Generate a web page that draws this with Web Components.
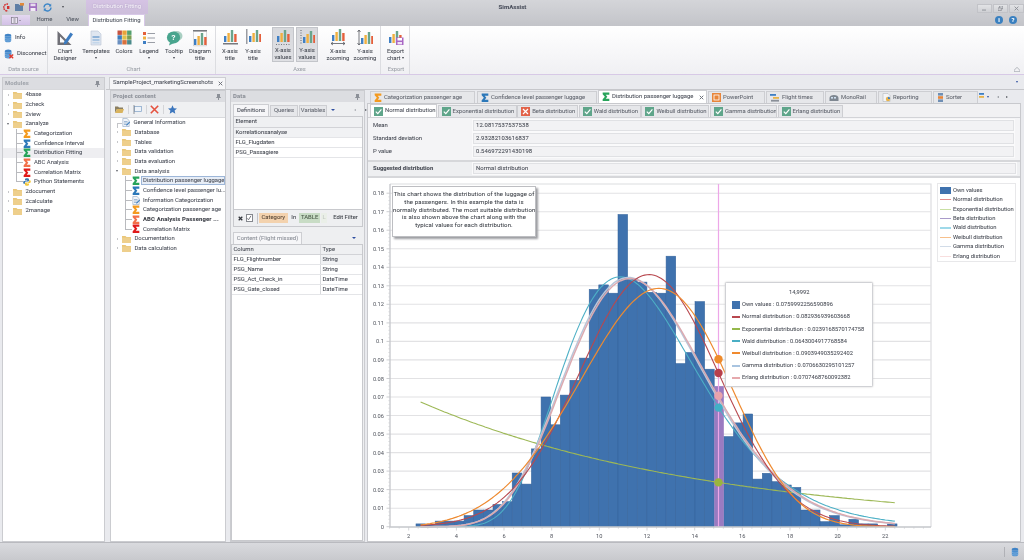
<!DOCTYPE html>
<html lang="en"><head><meta charset="utf-8"><title>SimAssist</title>
<style>
html,body{margin:0;padding:0;width:1024px;height:560px;overflow:hidden;background:#e9eaee}
body{font:5.9px/1.2 Roboto,"Liberation Sans",sans-serif;color:#44484f}
</style></head>
<body>
<sa-app>
  <sa-title-bar></sa-title-bar>
  <sa-ribbon>
    <sa-ribbon-group caption="Data source" style="width:48px">
      <div style="display:flex;flex-direction:column;padding:3px 0 0 4px;gap:0">
        <sa-ribbon-small icon="db" label="Info"></sa-ribbon-small>
        <sa-ribbon-small icon="dbx" label="Disconnect"></sa-ribbon-small>
      </div>
    </sa-ribbon-group>
    <sa-ribbon-group caption="Chart" style="width:167px;padding-left:3px;box-sizing:border-box">
      <sa-ribbon-button icon="designer" label="Chart|Designer" style="width:26px"></sa-ribbon-button>
      <sa-ribbon-button icon="templates" label="Templates" arrow style="width:32px;margin-left:2px"></sa-ribbon-button>
      <sa-ribbon-button icon="colors" label="Colors" style="width:24px"></sa-ribbon-button>
      <sa-ribbon-button icon="legend" label="Legend" arrow style="width:26px"></sa-ribbon-button>
      <sa-ribbon-button icon="tooltip" label="Tooltip" arrow style="width:24px"></sa-ribbon-button>
      <sa-ribbon-button icon="dtitle" label="Diagram|title" style="width:28px"></sa-ribbon-button>
    </sa-ribbon-group>
    <sa-ribbon-group caption="Axes" style="width:164px;padding-left:2px;box-sizing:border-box">
      <sa-ribbon-button icon="xt" label="X-axis|title" style="width:22px"></sa-ribbon-button>
      <sa-ribbon-button icon="yt" label="Y-axis|title" style="width:22px;margin-left:1px"></sa-ribbon-button>
      <sa-ribbon-button icon="xv" label="X-axis|values" selected style="width:22px;margin-left:8px"></sa-ribbon-button>
      <sa-ribbon-button icon="yv" label="Y-axis|values" selected style="width:22px;margin-left:2px"></sa-ribbon-button>
      <sa-ribbon-button icon="xz" label="X-axis|zooming" style="width:26px;margin-left:7px"></sa-ribbon-button>
      <sa-ribbon-button icon="yz" label="Y-axis|zooming" style="width:26px;margin-left:1px"></sa-ribbon-button>
    </sa-ribbon-group>
    <sa-ribbon-group caption="Export" style="width:28px;padding-left:1px;box-sizing:border-box">
      <sa-ribbon-button icon="export" label="Export|chart" inline-arrow style="width:25px"></sa-ribbon-button>
    </sa-ribbon-group>
  </sa-ribbon>
  <sa-main>
    <sa-pane slot="left" title="Modules" dim style="width:103px;margin:2px 0 0 2px">
      <sa-tree>
        <sa-tree-row icon="folder" exp="r" label="4base"></sa-tree-row>
        <sa-tree-row icon="folder" exp="r" label="2check"></sa-tree-row>
        <sa-tree-row icon="folder" exp="r" label="2view"></sa-tree-row>
        <sa-tree-row icon="folder" exp="d" label="2analyze"></sa-tree-row>
        <sa-tree-row level="1" icon="sigma" color="#f39a1f" label="Categorization"></sa-tree-row>
        <sa-tree-row level="1" icon="sigma" color="#2c78b9" label="Confidence Interval"></sa-tree-row>
        <sa-tree-row level="1" icon="sigma" color="#27a35a" label="Distribution Fitting" hover></sa-tree-row>
        <sa-tree-row level="1" icon="sigma" color="#f2704a" label="ABC Analysis"></sa-tree-row>
        <sa-tree-row level="1" icon="sigma" color="#e01b1b" label="Correlation Matrix"></sa-tree-row>
        <sa-tree-row level="1" last icon="python" label="Python Statements"></sa-tree-row>
        <sa-tree-row icon="folder" exp="r" label="2document"></sa-tree-row>
        <sa-tree-row icon="folder" exp="r" label="2calculate"></sa-tree-row>
        <sa-tree-row icon="folder" exp="r" label="2manage"></sa-tree-row>
      </sa-tree>
    </sa-pane>
    <sa-doc-strip slot="strip">
      <sa-tab label="SampleProject_marketingScreenshots" active close style="width:117px;height:12px;margin-left:3px"></sa-tab>
    </sa-doc-strip>
    <sa-pane slot="project" title="Project content" style="width:116px">
      <sa-project-tools></sa-project-tools>
      <sa-tree style="padding-top:0;padding-left:1px">
        <sa-tree-row icon="doc" exp="c" label="General Information"></sa-tree-row>
        <sa-tree-row icon="folder" exp="r" label="Database"></sa-tree-row>
        <sa-tree-row icon="folder" exp="r" label="Tables"></sa-tree-row>
        <sa-tree-row icon="folder" exp="r" label="Data validation"></sa-tree-row>
        <sa-tree-row icon="folder" exp="r" label="Data evaluation"></sa-tree-row>
        <sa-tree-row icon="folder" exp="d" label="Data analysis"></sa-tree-row>
        <sa-tree-row level="1" icon="sigma" color="#27a35a" label="Distribution passenger luggage" selected></sa-tree-row>
        <sa-tree-row level="1" icon="sigma" color="#2c78b9" label="Confidence level passenger lu..."></sa-tree-row>
        <sa-tree-row level="1" icon="doc" label="Information Categorization"></sa-tree-row>
        <sa-tree-row level="1" icon="sigma" color="#f39a1f" label="Categorization passenger age"></sa-tree-row>
        <sa-tree-row level="1" icon="sigma" color="#f2704a" label="ABC Analysis Passenger ..." bold></sa-tree-row>
        <sa-tree-row level="1" last icon="sigma" color="#e01b1b" label="Correlation Matrix"></sa-tree-row>
        <sa-tree-row icon="folder" exp="r" label="Documentation"></sa-tree-row>
        <sa-tree-row icon="folder" exp="r" label="Data calculation"></sa-tree-row>
      </sa-tree>
    </sa-pane>
    <sa-pane slot="data" title="Data" style="width:135px">
      <sa-data-panel></sa-data-panel>
    </sa-pane>
    <sa-doc-area slot="doc"></sa-doc-area>
  </sa-main>
  <sa-status></sa-status>
</sa-app>

<script>
/* ---------- shared icons ---------- */
const svg=(w,h,vb,body)=>`<svg width="${w}" height="${h}" viewBox="${vb}" style="display:block;flex:none">${body}</svg>`;
const barset=`<rect x="2" y="8" width="2.4" height="6" fill="#3f7fc4"/><rect x="5.4" y="5" width="2.4" height="9" fill="#f0b040"/><rect x="8.8" y="2" width="2.4" height="12" fill="#6aa58c"/><rect x="12.2" y="6" width="2.4" height="8" fill="#e4603c"/>`;
const dbShape=`<ellipse cx="5" cy="2.6" rx="4" ry="1.9" fill="#3f83c6"/><path d="M1 2.6V9.4C1 10.5 2.8 11.4 5 11.4S9 10.5 9 9.4V2.6C9 3.7 7.2 4.6 5 4.6S1 3.7 1 2.6Z" fill="#4b8fd0"/><path d="M1 5.4C1 6.5 2.8 7.4 5 7.4S9 6.5 9 5.4M1 7.8C1 8.9 2.8 9.8 5 9.8S9 8.9 9 7.8" stroke="#bcd6ee" stroke-width=".5" fill="none"/>`;
const ICONS={
  db:()=>svg(8,10,"0 0 10 12",dbShape),
  dbx:()=>svg(10,10,"0 0 12 12",dbShape+`<path d="M6.5 6.5L11 11M11 6.5L6.5 11" stroke="#e0382c" stroke-width="1.6"/>`),
  designer:()=>svg(18,18,"0 0 18 18",`<path d="M1.5 2L1.5 16H15.5Z M4 7.5V13.5H10Z" fill="#6f6f76" fill-rule="evenodd"/><path d="M8 13L14.5 3.5L17 5.2L10.5 14.7L7.8 15.6Z" fill="#3d7cc0"/>`),
  templates:()=>svg(16,16,"0 0 16 16",`<path d="M3 1H10L13 4V15H3Z" fill="#dfe6f0" stroke="#b9c4d3" stroke-width=".6"/><rect x="4.5" y="6" width="7" height="2" fill="#90b3d8"/><rect x="4.5" y="9" width="7" height="2" fill="#a9c5e2"/><rect x="4.5" y="12" width="7" height="1.5" fill="#c3d6ea"/>`),
  colors:()=>svg(15,15,"0 0 15 15",[["#c55340","#e8a33b","#55a06e"],["#3c7cbc","#e0c04a","#7a9e52"],["#6a8fc0","#d9703c","#4b8a8a"]].map((r,j)=>r.map((c,i)=>`<rect x="${.5+i*4.8}" y="${.5+j*4.8}" width="4.4" height="4.4" fill="${c}"/>`).join('')).join('')),
  legend:()=>svg(14,14,"0 0 14 14",`<rect x="1" y="1" width="3" height="3" fill="#e4603c"/><rect x="1" y="5.5" width="3" height="3" fill="#f0b040"/><rect x="1" y="10" width="3" height="3" fill="#3f7fc4"/><path d="M5.5 2.5H13M5.5 7H13M5.5 11.5H13" stroke="#9a9ea6"/>`),
  tooltip:()=>svg(17,16,"0 0 17 16",`<ellipse cx="10.5" cy="6" rx="6" ry="5" fill="#a9cfc2"/><ellipse cx="7.5" cy="7.5" rx="6.6" ry="6" fill="#49a58e"/><path d="M4 12L3 15.5L8 13Z" fill="#49a58e"/><text x="7.5" y="10.3" font-size="8" font-weight="700" fill="#fff" text-anchor="middle" font-family="Roboto">?</text>`),
  dtitle:()=>svg(16,18,"0 0 16 18",`<rect x="1" y="1" width="14" height="1.6" fill="#77797f"/><path d="M1.5 3V17M14.5 3V17M1.5 16.8H14.5" stroke="#c8c9cc" stroke-width=".7"/><g transform="translate(0,2)">${barset}</g>`),
  xt:()=>svg(15,16,"0 0 15 16",`<g transform="translate(-1,-1)">${barset}</g><rect x="0" y="14" width="15" height="1.5" fill="#77797f"/>`),
  yt:()=>svg(15,16,"0 0 15 16",`<rect x="0" y="0" width="1.5" height="15" fill="#9a9ca2"/><g transform="translate(1,-1)">${barset}</g>`),
  xv:()=>svg(15,16,"0 0 15 16",`<g transform="translate(-1,-2)">${barset}</g><path d="M0 14.5H15" stroke="#77797f" stroke-dasharray="1 1.5" stroke-width="1.2"/>`),
  yv:()=>svg(15,16,"0 0 15 16",`<path d="M1 0V14" stroke="#77797f" stroke-dasharray="1 1.5" stroke-width="1.2"/><g transform="translate(1,-1)">${barset}</g>`),
  xz:()=>svg(16,17,"0 0 16 17",`<g transform="translate(0,-2)">${barset}</g><path d="M1 14.5H15M3 13L1 14.5L3 16M13 13L15 14.5L13 16" stroke="#55585f" stroke-width=".8" fill="none"/>`),
  yz:()=>svg(16,17,"0 0 16 17",`<path d="M2 1V16M.5 3L2 1L3.5 3M.5 14L2 16L3.5 14" stroke="#55585f" stroke-width=".8" fill="none"/><g transform="translate(2,1)">${barset}</g>`),
  export:()=>svg(16,17,"0 0 16 17",`<g transform="translate(-1,0)">${barset}</g><rect x="8" y="8.5" width="7.5" height="7.5" fill="#a866c4"/><rect x="9.5" y="9" width="4.5" height="2.5" fill="#fff"/><rect x="9.5" y="13" width="4.5" height="2.4" fill="#f1e6f6"/>`),
  folder:()=>svg(9,8,"0 0 9 8",`<path d="M0 1H3.5L4.5 2H9V8H0Z" fill="#eac678"/><rect x="0" y="2.6" width="9" height="5.4" fill="#eecf8c"/>`),
  sigma:c=>svg(8,9.5,"0 0 8 10",`<path d="M.5 .5H7.5V3H3.7L5.4 5L3.7 7H7.5V9.5H.5V7.6L2.8 5L.5 2.4Z" fill="${c}"/>`),
  doc:()=>svg(8,9,"0 0 8 9",`<path d="M.8 .5H5L7.2 2.6V8.5H.8Z" fill="#f2f5f9" stroke="#8ea6c2" stroke-width=".6"/><path d="M2 3.5H5.5M2 5H6M2 6.5H5" stroke="#6c93be" stroke-width=".6"/><path d="M4 7L7.5 3.5L8 4.4L4.8 7.7Z" fill="#3c7cbc"/>`),
  python:()=>svg(8,8,"0 0 8 8",`<path d="M4 .3C2.5 .3 2 .8 2 1.6V2.6H4.2V3H1.2C.5 3 .2 3.6 .2 4.4S.6 5.8 1.2 5.8H2V4.8C2 4 2.6 3.6 3.2 3.6H5C5.6 3.6 6 3.2 6 2.6V1.6C6 .8 5.4 .3 4 .3Z" fill="#3b78b0"/><path d="M4 7.7C5.5 7.7 6 7.2 6 6.4V5.4H3.8V5H6.8C7.5 5 7.8 4.4 7.8 3.6S7.4 2.2 6.8 2.2H6V3.2C6 4 5.4 4.4 4.8 4.4H3C2.4 4.4 2 4.8 2 5.4V6.4C2 7.2 2.6 7.7 4 7.7Z" fill="#f3c83c"/>`),
  check:()=>svg(9,9,"0 0 9 9",`<rect width="9" height="9" fill="#5fa58a"/><path d="M1.8 4.6L3.8 6.6L7.4 2.4" stroke="#fff" stroke-width="1.2" fill="none"/>`),
  cross:()=>svg(9,9,"0 0 9 9",`<rect width="9" height="9" fill="#e2634a"/><path d="M2 2L7 7M7 2L2 7" stroke="#fff" stroke-width="1.2"/>`),
  ppt:()=>svg(9,9,"0 0 9 9",`<rect width="9" height="9" fill="#e8853a"/><rect x="2" y="2" width="5" height="5" fill="none" stroke="#fff" stroke-width=".8"/>`),
  flight:()=>svg(10,9,"0 0 10 9",`<rect x="0" y="1" width="6" height="1.8" fill="#3f7fc4"/><rect x="3" y="4" width="6" height="1.8" fill="#e8b34a"/><rect x="1" y="6.8" width="8" height="1.8" fill="#8a8f98"/>`),
  mono:()=>svg(10,8,"0 0 10 8",`<path d="M.5 7V4C.5 2 2.5 1 5 1S9.5 2 9.5 4V7Z" fill="#7e8791"/><rect x="2" y="3" width="2" height="1.6" fill="#cfe0f0"/><rect x="5" y="3" width="2" height="1.6" fill="#cfe0f0"/>`),
  report:()=>svg(9,9,"0 0 9 9",`<path d="M1 .5H6L8 2.5V8.5H1Z" fill="#f4f4f6" stroke="#b4b8be" stroke-width=".6"/><circle cx="6" cy="6" r="2.2" fill="#e8b34a"/><path d="M6 6V3.8A2.2 2.2 0 0 1 8.2 6Z" fill="#3f7fc4"/>`),
  sorter:()=>svg(7,9,"0 0 7 9",`<rect x="1" y="0" width="5" height="2.6" fill="#6f8fb5"/><rect x="1" y="3.2" width="5" height="2.6" fill="#e8853a"/><rect x="1" y="6.4" width="5" height="2.6" fill="#6f8fb5"/>`),
  partial:()=>svg(5,9,"0 0 5 9",`<rect y="1" width="5" height="1.8" fill="#3f7fc4"/><rect y="4" width="5" height="1.8" fill="#e8b34a"/>`),
};
const FONT=`font-family:Roboto,"Liberation Sans",sans-serif;`;
const tri=(dir,c='#3a4a6a',s=2)=>{
  const m={d:`border-left:${s}px solid transparent;border-right:${s}px solid transparent;border-top:${s*1.2}px solid ${c}`,
           r:`border-top:${s}px solid transparent;border-bottom:${s}px solid transparent;border-left:${s*1.2}px solid ${c}`,
           l:`border-top:${s}px solid transparent;border-bottom:${s}px solid transparent;border-right:${s*1.2}px solid ${c}`};
  return `<span style="display:inline-block;width:0;height:0;flex:none;${m[dir]}"></span>`;
};
const pin=`<svg width="5" height="6" viewBox="0 0 5 6" style="display:block;flex:none"><path d="M1 0H4V3.2H5V4H3V6H2V4H0V3.2H1Z" fill="#8c9098"/></svg>`;

class Base extends HTMLElement{
  connectedCallback(){
    if(this.shadowRoot) return;
    this.attachShadow({mode:'open'}).innerHTML=`<style>${this.css()}</style>${this.html()}`;
  }
  a(n,d=''){const v=this.getAttribute(n);return v===null?d:v}
  has(n){return this.hasAttribute(n)}
  css(){return ''} html(){return '<slot></slot>'}
}

class SaApp extends Base{
  css(){return `:host{display:flex;flex-direction:column;width:1024px;height:560px;overflow:hidden;background:#e9eaee;filter:blur(.32px);-webkit-text-stroke:.07px currentColor}`}
}
class SaTitleBar extends Base{
  css(){return `:host{display:block;height:26px;background:linear-gradient(#d4d5d9,#c3c4c9);flex:none;${FONT}}
  .r{display:flex;align-items:center}
  .r1{height:14px}.r2{height:12px;align-items:stretch}
  .qat{width:86px;display:flex;align-items:center;flex:none;box-sizing:border-box;padding-left:2px}
  .qat svg{flex:none}
  .ctx{width:62px;height:14px;flex:none;background:linear-gradient(#d5c3e4,#cdbedb);display:flex;align-items:center;justify-content:center;color:#f4eff8;font-size:5.9px;text-shadow:0 0 1.5px #9c8bb0}
  .title{flex:1;text-align:center;padding-right:100px;font-weight:700;font-size:6.1px;color:#4a4f5c}
  .win{display:flex;gap:1px;flex:none;margin-right:0;align-self:flex-start;margin-top:4px}
  .win span{width:15px;height:9px;background:linear-gradient(#e2e3e6,#cfd0d4);border:.5px solid #c2c3c8;box-sizing:border-box;display:flex;align-items:center;justify-content:center}
  .file{width:28px;margin:1px 0 1px 2px;background:linear-gradient(#e4d8f0,#d2c0e6);display:flex;align-items:center;justify-content:center;gap:1px}
  .t{display:flex;align-items:center;justify-content:center;color:#555a64}
  .active{width:57px;margin-left:2px;background:#fff;border:.7px solid #d8c8e8;border-bottom:0;box-sizing:border-box}
  .sp{flex:1}
  .help{display:flex;gap:6px;margin:2px 7px 0 0;flex:none}
  .help b{width:8px;height:8px;border-radius:50%;background:#3a80c0;color:#fff;font-size:6px;line-height:8px;text-align:center}`}
  html(){return `<div class="r r1"><div class="qat">
    <svg width="8" height="9" viewBox="0 0 8 9" style="margin-right:5px"><path d="M6 1.2A3.4 3.4 0 1 0 6 7.8" fill="none" stroke="#d43030" stroke-width="1.5" stroke-dasharray="1.6 .7"/><rect x="5" y="3" width="2.4" height="3" fill="#d43030"/></svg>
    <svg width="9" height="8" viewBox="0 0 9 8" style="margin-right:5px"><path d="M0 1H3.5L4.5 2H8V8H0Z" fill="#5e7fa6"/><rect x="5" y="0" width="4" height="2.6" fill="#e08a3a"/></svg>
    <svg width="8" height="8" viewBox="0 0 8 8" style="margin-right:6px"><rect width="8" height="8" fill="#a070c0"/><rect x="1.5" y=".6" width="5" height="2.6" fill="#e6dcee"/><rect x="1.5" y="5" width="5" height="3" fill="#f2ecf6"/></svg>
    <svg width="9" height="9" viewBox="0 0 9 9" style="margin-right:10px"><path d="M1 4.5A3.5 3.5 0 0 1 7.4 2.6M8 4.5A3.5 3.5 0 0 1 1.6 6.4" fill="none" stroke="#3c86c8" stroke-width="1.3"/><path d="M8.2 .6V3.4H5.6ZM.8 8.4V5.6H3.4Z" fill="#3c86c8"/></svg>
    ${tri('d','#45484f',1.7)}</div>
    <div class="ctx">Distribution Fitting</div>
    <div class="title">SimAssist</div>
    <div class="win"><span>${svg(5,5,"0 0 5 5",'<rect y="3.6" width="4" height=".9" fill="#8a8d94"/>')}</span><span>${svg(5,5,"0 0 5 5",'<rect x="1.6" width="3.2" height="2.8" fill="none" stroke="#8a8d94" stroke-width=".7"/><rect y="1.9" width="3.2" height="2.8" fill="#cfd0d4" stroke="#8a8d94" stroke-width=".7"/>')}</span><span>${svg(5,5,"0 0 5 5",'<path d="M.6 .6L4.4 4.4M4.4 .6L.6 4.4" stroke="#8a8d94" stroke-width=".9"/>')}</span></div>
  </div>
  <div class="r r2">
    <div class="file">${svg(7,7,"0 0 7 7",'<rect x=".5" y=".5" width="6" height="6" fill="#ece6f3" stroke="#7f7a88" stroke-width=".7"/><rect x="2.4" y=".5" width="2.2" height="6" fill="#b8b4c0"/>')}${tri('d','#6c6876',1.2)}</div>
    <div class="t" style="width:29px">Home</div><div class="t" style="width:27px">View</div>
    <div class="t active">Distribution Fitting</div><div class="sp"></div>
    <div class="help"><b>i</b><b>?</b></div>
  </div>`}
}
class SaRibbon extends Base{
  css(){return `:host{display:flex;height:49px;flex:none;background:linear-gradient(#fff,#f6f6f8 60%,#f0f0f3);border-bottom:1px solid #d7c9e6;box-sizing:border-box;position:relative;${FONT}}
  .collapse{position:absolute;right:4px;bottom:2px;width:6px;height:5px}`}
  html(){return `<slot></slot><div class="collapse">${svg(6,5,"0 0 6 5",'<path d="M3 .3L5.8 3.2V4.7H.2V3.2Z" fill="none" stroke="#9a9ea6" stroke-width=".7"/>')}</div>`}
}
class SaRibbonGroup extends Base{
  css(){return `:host{display:flex;flex-direction:column;height:48px;border-right:1px solid #dcdde1;flex:none;box-sizing:border-box;margin-right:1px}
  .b{display:flex;height:36px;margin-top:1px;flex:none}
  .c{flex:1;display:flex;align-items:center;justify-content:center;color:#a1a5ac;font-size:5.7px;padding-top:1px}`}
  html(){return `<div class="b"><slot></slot></div><div class="c">${this.a('caption')}</div>`}
}
class SaRibbonButton extends Base{
  css(){return `:host{display:flex;flex-direction:column;align-items:center;flex:none;height:35px;box-sizing:border-box;padding-top:1.5px;color:#4a4e57;font-size:5.9px;line-height:7.2px;text-align:center}
  :host([selected]){background:linear-gradient(#d8d9dd,#dfe0e4);border:.7px solid #c3c5ca}
  .i{height:18px;display:flex;align-items:center;justify-content:center;margin-bottom:1.5px}
  .a{display:flex;justify-content:center;padding-top:1.5px}
  .l{display:flex;align-items:center;gap:1.5px;justify-content:center}`}
  html(){
    const ls=this.a('label').split('|');
    const inl=this.has('inline-arrow');
    return `<div class="i">${ICONS[this.a('icon')]()}</div>`+
      ls.map((l,i)=>`<div class="l">${l}${inl&&i==ls.length-1?tri('d','#3d4048',1.8):''}</div>`).join('')+
      (this.has('arrow')?`<div class="a">${tri('d','#3d4048',1.8)}</div>`:'');
  }
}
class SaRibbonSmall extends Base{
  css(){return `:host{display:flex;align-items:center;gap:3px;height:16px;color:#4a4e57;white-space:nowrap}`}
  html(){return `${ICONS[this.a('icon')]()}<span>${this.a('label')}</span>`}
}
class SaMain extends Base{
  css(){return `:host{display:flex;flex:1;min-height:0;height:467px;${FONT}}
  .left{display:flex;flex:none}
  .right{display:flex;flex-direction:column;flex:1;min-width:0;margin-left:1px}
  .body{display:flex;flex:1;min-height:0;padding:.5px 3px 0 4px;gap:4px;border-top:1px solid #c6c7cb;box-sizing:border-box}
  .body ::slotted([slot=doc]){margin-left:-2px}`}
  html(){return `<div class="left"><slot name="left"></slot></div><div class="right"><slot name="strip"></slot>
  <div class="body"><slot name="project"></slot><slot name="data"></slot><slot name="doc"></slot></div></div>`}
}
class SaDocStrip extends Base{
  css(){return `:host{display:flex;align-items:flex-end;height:13.5px;flex:none;position:relative}
  .m{margin-left:auto;align-self:center;margin-right:6px}`}
  html(){return `<slot></slot><div class="m">${tri('d','#2f4fa0',1.9)}</div>`}
}
class SaPane extends Base{
  css(){return `:host{display:flex;flex-direction:column;flex:none;min-height:0;border:1px solid #cbccd0;box-sizing:border-box;background:#eeeff1}
  .h{height:11px;flex:none;display:flex;align-items:center;justify-content:space-between;padding:0 4px 0 2px;background:#dcdde1;color:#8d9199;font-weight:700;font-size:5.9px;letter-spacing:.15px}
  :host([dim]) .h{color:#a3a7ae}
  .c{flex:1;min-height:0;display:flex;flex-direction:column}`}
  html(){return `<div class="h"><span>${this.a('title')}</span>${pin}</div><div class="c"><slot></slot></div>`}
}
class SaTree extends Base{
  css(){return `:host{display:block;flex:1;background:#fff;padding-top:0.2px;min-height:0;overflow:hidden;border-top:1px solid #d8d9dc}`}
}
class SaTreeRow extends Base{
  css(){return `:host{display:flex;align-items:center;height:9.66px;white-space:nowrap;color:#50545e}
  :host([hover]){background:#eeeef1}
  .e{width:10px;height:100%;flex:none;display:flex;align-items:center;justify-content:center}
  .c0{width:5px;height:50%;border-top:1px solid #c4c5c9;border-left:1px solid #c4c5c9;align-self:flex-end;box-sizing:border-box;margin-left:4px}
  .i{flex:none;display:flex;align-items:center;justify-content:flex-start}
  .conn{width:7px;height:100%;margin-left:13px;margin-right:0;flex:none;display:flex;flex-direction:column}
  .conn i{display:block;flex:1;border-left:.8px solid #b9babe;box-sizing:border-box}
  .conn i:first-child{border-bottom:.8px solid #b9babe}
  :host([last]) .conn i:last-child{border-left:0}
  .t{margin-left:2.5px;padding:.2px 1px}
  :host([level="1"]) .t{margin-left:2px}
  :host([selected]) .t{background:#e7edf6;outline:.7px solid #9db6d8;margin-right:1px;flex:1;padding-right:0;overflow:hidden}
  :host([bold]) .t{font-weight:700;color:#3c3f47;letter-spacing:.16px}`}
  html(){
    const lv=this.a('level','0'),ex=this.a('exp');
    const pre=lv=='1'?`<div class="conn"><i></i><i></i></div>`:
      `<div class="e">${ex=='r'?tri('r','#8d9096',1.6):ex=='d'?tri('d','#5d6068',1.8):ex=='c'?'<div class="c0"></div>':''}</div>`;
    return `${pre}<div class="i">${ICONS[this.a('icon')](this.a('color'))}</div><div class="t">${this.a('label')}</div>`;
  }
}
class SaProjectTools extends Base{
  css(){return `:host{display:flex;align-items:center;height:15px;flex:none;background:#eff0f2;padding-left:4px;gap:4px}
  .s{width:.7px;height:9px;background:#d4d5d8}`}
  html(){return `${svg(9,7,"0 0 9 7",'<path d="M0 .5H3L4 1.5H8V3H2L0 7Z" fill="#8a7f62"/><path d="M2 3H9L7.5 7H0Z" fill="#d9b45f"/>')}
  <div class="s"></div>
  ${svg(9,9,"0 0 9 9",'<rect x="1.5" y="1.5" width="7" height="5" fill="#eef3f9" stroke="#7ea0c7" stroke-width=".7"/><path d="M1 0V9" stroke="#7a7e86" stroke-width=".8"/>')}
  <div class="s"></div>
  ${svg(9,9,"0 0 9 9",'<path d="M.8 .8L8.2 8.2M8.2 .8L.8 8.2" stroke="#e5523f" stroke-width="1.6"/>')}
  <div class="s"></div>
  ${svg(9,9,"0 0 9 9",'<path d="M4.5 .2L5.8 3.2L9 3.5L6.6 5.6L7.3 8.8L4.5 7.1L1.7 8.8L2.4 5.6L0 3.5L3.2 3.2Z" fill="#3c76bd"/>')}`}
}
class SaTab extends Base{
  css(){return `:host{display:flex;align-items:center;flex:none;box-sizing:border-box;height:12px;gap:2px;padding:0 2px 0 3px;background:#e6e7ea;border:.8px solid #cdced2;border-bottom:0;color:#666a73;white-space:nowrap;overflow:hidden}
  :host([active]){background:#f6f6f8;color:#50545e}
  :host([white]){background:#fff;color:#50545e}
  .x{margin-left:auto;flex:none}`}
  html(){const ic=this.a('icon');
    return `${ic?ICONS[ic](this.a('color')):''}<span>${this.a('label')}</span>${this.has('close')?`<div class="x">${svg(5,5,"0 0 5 5",'<path d="M.7 .7L4.3 4.3M4.3 .7L.7 4.3" stroke="#70747c" stroke-width="1"/>')}</div>`:''}`}
}
class SaGridRow extends Base{
  css(){return `:host{display:flex;height:10px;flex:none;box-sizing:border-box;border-bottom:.8px solid #e4e5e8;background:#fff;color:#4a4e57;align-items:stretch}
  :host([head]){background:#eff0f2;border-bottom:.8px solid #d2d3d7}
  :host([alt]){background:#f1f2f4}
  span{display:flex;align-items:center;padding-left:1.5px;white-space:nowrap;overflow:hidden}
  span:first-of-type{width:var(--col,100%);flex:none;box-sizing:border-box}
  span+span{flex:1;border-left:.8px solid #d8d9dc}
  :host([alt2]) span+span{background:#f1f2f4}`}
  html(){return this.a('cells').split('|').map(c=>`<span>${c}</span>`).join('')}
}
class SaDataPanel extends Base{
  css(){return `:host{display:flex;flex-direction:column;flex:1;min-height:0;padding:1px 1px 0 0;box-sizing:border-box;${FONT}}
  .tabs{display:flex;align-items:flex-end;height:13px;padding-left:2px;gap:1px;flex:none}
  .nav{display:flex;align-items:center;gap:9px;margin-left:3px;align-self:center;padding-top:1px}
  .box{margin-left:2px;flex:none;height:111px;display:flex;flex-direction:column;border:.8px solid #c8c9cd;background:#fff;box-sizing:border-box}
  .fill{flex:1}
  .filter{display:flex;align-items:center;height:17px;flex:none;background:#eeeff1;border-top:.8px solid #c8c9cd;padding-left:3.5px;box-sizing:border-box}
  .chk{width:7.5px;height:7.5px;background:#fff;border:.7px solid #85888e;box-sizing:border-box;margin-left:3px;display:flex;align-items:center;justify-content:center}
  .sep{width:.8px;height:11px;background:#c2c3c8;margin:0 1.5px 0 3.5px}
  .chip{height:10px;display:flex;align-items:center;justify-content:center;flex:none}
  .tabs2{display:flex;align-items:flex-end;height:13.5px;margin-top:3.5px;padding-left:2px;flex:none;justify-content:space-between;padding-right:7px}
  .tabs2 .m{align-self:center}
  .box2{flex:1;min-height:0;display:flex;flex-direction:column;border:.8px solid #c8c9cd;background:#fff;box-sizing:border-box;--col:88px;margin-bottom:0}`}
  html(){return `<div class="tabs">
    <sa-tab label="Definitions" active style="width:36px;justify-content:center;height:12px;padding:0"></sa-tab>
    <sa-tab label="Queries" style="width:28px;justify-content:center;height:11px;padding:0"></sa-tab>
    <sa-tab label="Variables" style="width:28px;justify-content:center;height:11px;padding:0"></sa-tab>
    <div class="nav">${tri('d','#2f4fa0',2)}<span style="width:1px"></span>${tri('l','#a3a6ac',1.8)}${tri('r','#55585f',1.8)}</div></div>
  <div class="box">
    <sa-grid-row head cells="Element" style="height:11px"></sa-grid-row>
    <sa-grid-row alt cells="Korrelationsanalyse"></sa-grid-row>
    <sa-grid-row cells="FLG_Flugdaten"></sa-grid-row>
    <sa-grid-row cells="PSG_Passagiere"></sa-grid-row>
    <div class="fill"></div>
    <div class="filter">
      ${svg(5,5,"0 0 5 5",'<path d="M.7 .7L4.3 4.3M4.3 .7L.7 4.3" stroke="#33363c" stroke-width="1.3"/>')}
      <div class="chk">${svg(6,6,"0 0 6 6",'<path d="M1 3.2L2.5 4.8L5 .8" stroke="#55585f" stroke-width=".8" fill="none"/>')}</div>
      <div class="sep"></div>
      <div class="chip" style="width:29px;background:#f3d2ae;color:#5b4a3a">Category</div>
      <span style="margin:0 3px 0 3.5px">In</span>
      <div class="chip" style="width:21px;background:#c8dcc5;color:#4a5a48">TABLE</div>
      <div class="chip" style="width:6px;background:#eaefe8;color:#c6cbc4;margin-left:1px">L</div>
      <span style="margin-left:6px">Edit Filter</span>
    </div>
  </div>
  <div class="tabs2"><sa-tab label="Content (Flight missed)" active style="width:69px;justify-content:center;padding:0;height:12.5px;color:#8d9199"></sa-tab><div class="m">${tri('d','#2f4fa0',2)}</div></div>
  <div class="box2">
    <sa-grid-row head cells="Column|Type"></sa-grid-row>
    <sa-grid-row alt2 cells="FLG_Flightnumber|String"></sa-grid-row>
    <sa-grid-row cells="PSG_Name|String"></sa-grid-row>
    <sa-grid-row cells="PSG_Act_Check_in|DateTime"></sa-grid-row>
    <sa-grid-row cells="PSG_Gate_closed|DateTime"></sa-grid-row>
  </div>`}
}
class SaStat extends Base{
  css(){return `:host{display:flex;align-items:center;height:13px;flex:none;padding-left:5px;color:#4a4e57}
  :host([bold]) .n{font-weight:700}
  .n{width:100px;flex:none}
  .v{flex:1;height:11px;margin-right:var(--mr,6px);background:#f2f2f4;border:.8px solid #e0e1e4;box-sizing:border-box;display:flex;align-items:center;padding-left:2px;letter-spacing:.1px;outline:.7px solid #fafafb}`}
  html(){return `<div class="n">${this.a('name')}</div><div class="v">${this.a('value')}</div>`}
}
class SaDocArea extends Base{
  css(){return `:host{display:flex;flex-direction:column;width:654px;flex:none;min-height:0;${FONT}}
  .tabs{display:flex;align-items:flex-end;height:13px;flex:none;padding-left:3px;gap:1px;background:#e9eaee;position:relative}
  .nav{display:flex;align-items:center;gap:7px;margin-left:7px;align-self:center}
  .frame{flex:1;min-height:0;display:flex;flex-direction:column;border:1px solid #c8c9cd;box-sizing:border-box;background:#f4f4f6}
  .sub{display:flex;align-items:flex-end;height:14px;flex:none;padding-left:2px;gap:.6px;background:#f1f1f3;border-bottom:.8px solid #d2d3d7;box-sizing:border-box}
  .stats{flex:none;padding:1px 0 1.5px;background:#f4f4f6;border-bottom:2px solid #d6d7da;display:flex;flex-direction:column}
  .sug{flex:none;height:16.5px;display:flex;align-items:center;background:#eeeff1;border-bottom:2px solid #d6d7da;box-sizing:border-box;--mr:4px}
  .sug sa-stat{flex:1}`}
  html(){
    return `<div class="tabs">
     <sa-tab icon="sigma" color="#f39a1f" label="Categorization passenger age" style="width:105px"></sa-tab>
     <sa-tab icon="sigma" color="#2c78b9" label="Confidence level passenger luggage" style="width:120px;margin-left:1px"></sa-tab>
     <sa-tab icon="sigma" color="#27a35a" label="Distribution passenger luggage" white close style="width:109px;height:13px"></sa-tab>
     <sa-tab icon="ppt" label="PowerPoint" style="width:57px"></sa-tab>
     <sa-tab icon="flight" label="Flight times" style="width:58px"></sa-tab>
     <sa-tab icon="mono" label="MonoRail" style="width:52px"></sa-tab>
     <sa-tab icon="report" label="Reporting" style="width:54px"></sa-tab>
     <sa-tab icon="sorter" label="Sorter" style="width:45px"></sa-tab>
     <div style="display:flex;align-items:center;gap:3px;margin-left:0;align-self:center">${ICONS.partial()}${tri('d','#2f4fa0',1.9)}</div>
     <div class="nav">${tri('l','#8d9096',1.8)}${tri('r','#55585f',1.8)}</div>
    </div>
    <div class="frame">
     <div class="sub">
      <sa-tab white icon="check" label="Normal distribution" style="width:67px;height:13px"></sa-tab>
      <sa-tab icon="check" label="Exponential distribution" style="width:79px"></sa-tab>
      <sa-tab icon="cross" label="Beta distribution" style="width:61px"></sa-tab>
      <sa-tab icon="check" label="Wald distribution" style="width:62px"></sa-tab>
      <sa-tab icon="check" label="Weibull distribution" style="width:68px"></sa-tab>
      <sa-tab icon="check" label="Gamma distribution" style="width:67px"></sa-tab>
      <sa-tab icon="check" label="Erlang distribution" style="width:65px"></sa-tab>
     </div>
     <div class="stats">
      <sa-stat name="Mean" value="12.0817537537538"></sa-stat>
      <sa-stat name="Standard deviation" value="2.93282103616837"></sa-stat>
      <sa-stat name="P value" value="0.546972291430198"></sa-stat>
     </div>
     <div class="sug"><sa-stat bold name="Suggested distribution" value="Normal distribution"></sa-stat></div>
     <sa-chart></sa-chart>
    </div>`}
}
/* chart */
const xp=v=>408.7+(v-2)*23.83, yp=v=>526.7-v*1853;
const lg=z=>(z-.5)*Math.log(z)-z+.5*Math.log(2*Math.PI)+1/(12*z)-1/(360*z*z*z);
const mu=12.0817,sd=2.9328;
const gammaPdf=(x,k,t)=>Math.exp((k-1)*Math.log(x)-x/t-k*Math.log(t)-lg(k));
const F={
  normal:x=>Math.exp(-((x-mu)**2)/(2*sd*sd))/(sd*Math.sqrt(2*Math.PI)),
  exp:x=>Math.exp(-x/mu)/mu,
  wald:x=>{const l=172;return Math.sqrt(l/(2*Math.PI*x**3))*Math.exp(-l*(x-mu)**2/(2*mu*mu*x))},
  gamma:x=>gammaPdf(x,15.48,.775),
  erlang:x=>gammaPdf(x,15.5,.778),
  weibull:x=>{const k=4.5,l=13.22;return k/l*Math.pow(x/l,k-1)*Math.exp(-Math.pow(x/l,k))},
};
const path=f=>{let d='';for(let x=2.5;x<=22.5;x+=.1){d+=(d?'L':'M')+xp(x).toFixed(1)+' '+yp(f(x)).toFixed(1)}return d};
const BARS=[.0015,.001,.003,.003,.003,.006,.009,.009,.012,.0135,.029,.023,.042,.07,.055,.071,.079,.091,.128,.1305,.126,.1685,.134,.132,.1265,.126,.146,.088,.094,.1215,.085,.0759,.0486,.056,.0608,.0257,.0288,.0243,.0225,.0212,.009,.009,.0027,.006,.001,.004,.0015,.0015,0,.0015];
class SaChart extends Base{
  css(){return `:host{display:flex;flex:1;min-height:0;background:#fff;position:relative;${FONT}}
  svg{display:block;flex:none}
  text{font-size:5.7px;fill:#50545d}
  .lg{margin:5px 0 0 1px;width:79px;height:79px;border:.8px solid #e8e8ea;box-sizing:border-box;padding:1.5px 0 0 2px;display:flex;flex-direction:column}
  .li{display:flex;align-items:center;height:9.6px;gap:2px;color:#50545d;white-space:nowrap;font-size:5.8px}
  .li i{width:11px;flex:none;display:block;height:1.2px}
  .li i.sq{height:7px;background:#3f72ae}
  .note{position:absolute;left:24px;top:8px;width:144px;height:51px;box-sizing:border-box;background:#fff;border:.8px solid #bdbec2;box-shadow:1.5px 1.5px 2px #9c9da1;font-size:6px;line-height:7.8px;text-align:center;color:#44484f;padding-top:3px;letter-spacing:.13px;white-space:nowrap}
  .tip{position:absolute;left:357px;top:104px;width:148px;height:105px;box-sizing:border-box;background:#fff;border:.8px solid #d0d1d5;border-radius:1.5px;box-shadow:0 0 2px #c8c8c8;padding:4.5px 0 0 5.5px;color:#50545d;font-size:5.7px;letter-spacing:.06px}
  .tip .h{text-align:center;height:11px;line-height:9px;padding-right:5px}
  .tip .r{display:flex;align-items:center;height:12.2px;gap:2.5px;white-space:nowrap}
  .tip .r i{width:8px;height:2px;flex:none;display:block}
  .tip .r i.sq{height:8px;background:#3f72ae}`}
  html(){
    let g='';
    for(let i=0;i<=18;i++){const y=yp(i/100).toFixed(1);
      if(i>0)g+=`<path d="M390 ${y}H931" stroke="#e2e2e4" stroke-width="1.1"/>`;
      g+=`<path d="M386.5 ${y}H390" stroke="#b9babf" stroke-width=".7"/><text x="384" y="${+y+2}" text-anchor="end">${i==0?'0':i==10?'0.1':(i/100).toFixed(2)}</text>`;
      if(i<18)for(let m=1;m<5;m++){const yy=yp((i+m/5)/100);g+=`<path d="M388.2 ${yy.toFixed(1)}H390" stroke="#c9cacd" stroke-width=".5"/>`}
    }
    for(let v=2;v<=22;v+=2){g+=`<text x="${xp(v).toFixed(1)}" y="537.5" text-anchor="middle">${v}</text>`}
    for(let v=1.2;v<24;v+=.4){const x=xp(v),maj=Math.abs(v/2-Math.round(v/2))<.01;
      if(x<931)g+=`<path d="M${x.toFixed(1)} 527V${maj?530.5:528.8}" stroke="${maj?'#b9babf':'#c9cacd'}" stroke-width=".6"/>`}
    let b='';
    BARS.forEach((v,i)=>{if(!v)return;const x=416+i*9.62;
      if(i==31)return;
      b+=`<rect x="${x.toFixed(1)}" y="${yp(v).toFixed(1)}" width="9.62" height="${(526.7-yp(v)).toFixed(1)}" fill="#3f72ae" stroke="#36649c" stroke-width=".55"/>`});
    const hx=416+31*9.62,hy=yp(.0759);
    const lines=[['exp','#9db856',1.1],['wald','#4db0c6',1.1],['gamma','#b9c6d8',1.5],['erlang','#dcaab0',1.5],['normal','#b8484f',1.1],['weibull','#ee8a30',1.2]]
      .map(([k,c,w])=>`<path d="${path(F[k])}" fill="none" stroke="${c}" stroke-width="${w}"/>`).join('');
    const dots=[[.0903949,'#ee8a2a'],[.0829369,'#b8404c'],[.0707,'#e8a3ac'],[.0643,'#41b0c6'],[.0239,'#9ab53e']]
      .map(([v,c])=>`<circle cx="718.5" cy="${yp(v).toFixed(1)}" r="4.2" fill="${c}"/>`).join('');
    const leg=[['Own values',0],['Normal distribution','#e08d8d'],['Exponential distribution','#c9dfa3'],['Beta distribution','#a99bca'],['Wald distribution','#9fd9e9'],['Weibull distribution','#f7c08c'],['Gamma distribution','#d2dce8'],['Erlang distribution','#f8dede']]
      .map(([t,c])=>`<div class="li">${c?`<i style="background:${c}"></i>`:'<i class="sq"></i>'}<span>${t}</span></div>`).join('');
    const tip=[['Own values : 0.0759992256590896',0],['Normal distribution : 0.082936939603668','#b8474f'],['Exponential distribution : 0.0239168570174758','#95b84b'],['Wald distribution : 0.0643004917768584','#4aaec4'],['Weibull distribution : 0.0903949035292402','#f08a2e'],['Gamma distribution : 0.0706630295101257','#a9c4e0'],['Erlang distribution : 0.0707468760092382','#e6a9ad']]
      .map(([t,c])=>`<div class="r">${c?`<i style="background:${c}"></i>`:'<i class="sq"></i>'}<span>${t}</span></div>`).join('');
    return `<svg width="568" height="363" viewBox="368 178 568 363">
      <defs><pattern id="h" width="2" height="2" patternUnits="userSpaceOnUse"><rect width="2" height="2" fill="#6f70b6"/><path d="M0 0L2 2M2 0L0 2" stroke="#c486cc" stroke-width=".5"/></pattern></defs>
      <path d="M390 184H931V527" fill="none" stroke="#dcdde0" stroke-width="1.2"/>
      ${g}
      ${b}
      <rect x="${hx.toFixed(1)}" y="${hy.toFixed(1)}" width="9.62" height="${(526.7-hy).toFixed(1)}" fill="url(#h)"/>
      <path d="M718.5 184V527" stroke="#eda7e8" stroke-width="1.2"/>
      ${lines}${dots}
      <path d="M390 184V527H931" fill="none" stroke="#c5c7cb" stroke-width="1.3"/>
    </svg>
    <div class="lg">${leg}</div>
    <div class="note">This chart shows the distribution of the luggage of<br>the passengers. In this example the data is<br>normally distributed. The most suitable distribution<br>is also shown above the chart along with the<br>typical values for each distribution.</div>
    <div class="tip"><div class="h">14,9992</div>${tip}</div>`;
  }
}
class SaStatus extends Base{
  css(){return `:host{display:flex;align-items:center;justify-content:flex-end;height:18px;flex:none;background:linear-gradient(#d9dade,#c8c9cd);border-top:1px solid #b9babf;box-sizing:border-box}
  .s{width:.7px;height:10px;background:#b0b1b6;margin-right:6px}
  .d{margin-right:5px}`}
  html(){return `<div class="s"></div><div class="d">${svg(8,10,"0 0 10 12",dbShape)}</div>`}
}
const defs={'sa-app':SaApp,'sa-title-bar':SaTitleBar,'sa-ribbon':SaRibbon,'sa-ribbon-group':SaRibbonGroup,'sa-ribbon-button':SaRibbonButton,'sa-ribbon-small':SaRibbonSmall,'sa-main':SaMain,'sa-doc-strip':SaDocStrip,'sa-pane':SaPane,'sa-tree':SaTree,'sa-tree-row':SaTreeRow,'sa-project-tools':SaProjectTools,'sa-tab':SaTab,'sa-grid-row':SaGridRow,'sa-data-panel':SaDataPanel,'sa-stat':SaStat,'sa-doc-area':SaDocArea,'sa-chart':SaChart,'sa-status':SaStatus};
for(const k in defs)customElements.define(k,defs[k]);
</script>
</body></html>
